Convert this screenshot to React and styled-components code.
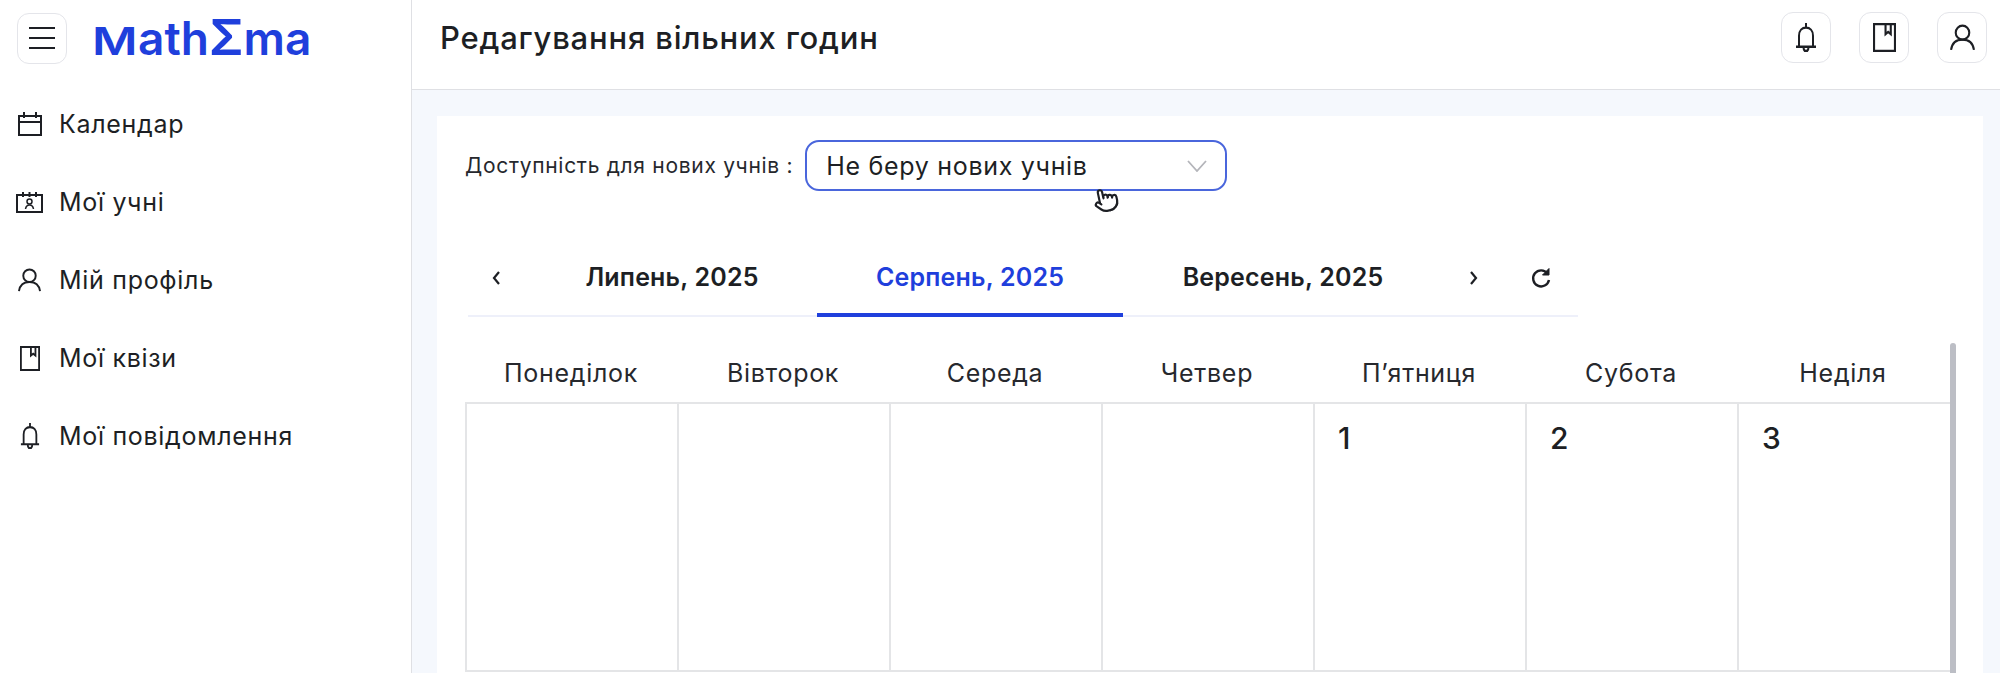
import React from 'react';
import styled, { createGlobalStyle } from 'styled-components';
import { Pointer } from 'lucide-react';

const GlobalStyle = createGlobalStyle`
  html, body {
    margin: 0;
    padding: 0;
    height: 100%;
    background: #ffffff;
  }
  * {
    box-sizing: border-box;
  }
  body {
    font-family: 'Inter', 'Noto Sans', sans-serif;
    color: #1d1f24;
  }
`;

const Page = styled.div`
  display: grid;
  grid-template-columns: 412px 1fr;
  width: 2000px;
  height: 673px;
  overflow: hidden;
`;

const Sidebar = styled.aside`
  background: #ffffff;
  border-right: 1px solid #dfe0e4;
`;

const Brand = styled.div`
  display: flex;
  align-items: center;
  height: 80px;
  padding: 0 0 4px 17px;
  gap: 25px;
`;

const IconButton = styled.button`
  display: flex;
  align-items: center;
  justify-content: center;
  width: 50px;
  height: 51px;
  padding: 0;
  background: #ffffff;
  border: 1px solid #e4e5ea;
  border-radius: 12px;
  color: #1d1f24;
`;

const Logo = styled.div`
  font-size: 46px;
  line-height: 1;
  font-weight: 600;
  color: #1f3fdc;
`;

const LogoInitial = styled.span`
  display: inline-block;
  margin-right: 11px;
  font-size: 38px;
  transform: scaleX(1.3);
  transform-origin: left center;
`;

const LogoSigma = styled.span`
  font-size: 50px;
  line-height: 0;
`;

const Nav = styled.nav`
  display: flex;
  flex-direction: column;
  padding-top: 5px;
`;

const NavItem = styled.div`
  display: flex;
  align-items: center;
  gap: 16px;
  height: 78px;
  padding-left: 16px;
  font-size: 25px;
  letter-spacing: 0.7px;
  color: #1d1f24;
`;

const NavIcon = styled.span`
  display: flex;
  justify-content: center;
  width: 27px;
`;

const Main = styled.main`
  display: flex;
  flex-direction: column;
  min-width: 0;
`;

const TopBar = styled.header`
  display: flex;
  align-items: center;
  justify-content: space-between;
  height: 90px;
  padding: 0 13px 14px 28px;
  background: #ffffff;
  border-bottom: 1px solid #dfe0e4;
  flex-shrink: 0;
`;

const Title = styled.h1`
  margin: 0;
  font-size: 31px;
  font-weight: 500;
  letter-spacing: 0.8px;
  color: #1d1f24;
`;

const TopActions = styled.div`
  display: flex;
  gap: 28px;
`;

const Content = styled.div`
  flex: 1;
  padding: 26px 17px 0 25px;
  background: #f5f8fd;
  min-height: 0;
`;

const Card = styled.section`
  height: 100%;
  padding: 24px 0 0 28px;
  background: #ffffff;
  overflow: hidden;
`;

const Availability = styled.div`
  position: relative;
  display: flex;
  align-items: center;
  gap: 12px;
`;

const Label = styled.label`
  font-size: 21px;
  letter-spacing: 0.7px;
  color: #26282d;
`;

const Select = styled.div`
  display: flex;
  align-items: center;
  justify-content: space-between;
  width: 422px;
  height: 51px;
  padding: 0 18px 0 19px;
  border: 2px solid #4a66dc;
  border-radius: 14px;
  font-size: 25px;
  letter-spacing: 0.7px;
  color: #1d1f24;
`;

const CursorMark = styled.span`
  position: absolute;
  left: 628px;
  top: 47px;
  display: flex;
  color: #1d1f24;
  transform: rotate(-12deg);
`;

const Tabs = styled.div`
  display: flex;
  align-items: center;
  width: 1110px;
  height: 76px;
  margin: 50px 0 26px 3px;
  border-bottom: 2px solid #eef0fa;
`;

const Arrow = styled.span`
  display: flex;
  justify-content: center;
  width: ${({ $width }) => $width}px;
  padding-left: ${({ $inset }) => $inset || 0}px;
  color: #1d1f24;
`;

const Tab = styled.div`
  display: flex;
  align-items: center;
  justify-content: center;
  width: 306px;
  height: 76px;
  margin-bottom: -2px;
  padding-left: ${({ $inset }) => $inset || 0}px;
  border-bottom: 4px solid ${({ $active }) => ($active ? '#1f3fdc' : 'transparent')};
  font-size: 25px;
  font-weight: 600;
  letter-spacing: 0.2px;
  color: ${({ $active }) => ($active ? '#1f3fdc' : '#1d1f24')};
`;

const Calendar = styled.div`
  position: relative;
  width: 1491px;
`;

const ScrollThumb = styled.div`
  position: absolute;
  top: 0;
  left: 1485px;
  width: 6px;
  height: 400px;
  border-radius: 3px;
  background: #bcbec5;
`;

const WeekHead = styled.div`
  display: grid;
  grid-template-columns: repeat(7, 212px);
  width: 1485px;
  height: 61px;
  border-bottom: 2px solid #e4e5e7;
`;

const WeekDay = styled.div`
  display: flex;
  align-items: center;
  justify-content: center;
  font-size: 25px;
  letter-spacing: 0.7px;
  color: #26282d;
`;

const Week = styled.div`
  display: grid;
  grid-template-columns: repeat(7, 212px);
  width: 1485px;
  height: 268px;
  border-bottom: 2px solid #e4e5e7;
`;

const Day = styled.div`
  padding: 16px 0 0 23px;
  border-left: 2px solid #e4e5e7;
  font-size: 30px;
  font-weight: 500;
  line-height: 36px;
  color: #1d1f24;
`;

const Line = { fill: 'none', stroke: 'currentColor', strokeWidth: 2 };

const MenuIcon = () => (
  <svg width="28" height="24" viewBox="0 0 28 24" {...Line}>
    <path d="M1 2h26M1 12h26M1 22h26" />
  </svg>
);

const CalendarIcon = () => (
  <svg width="24" height="24" viewBox="0 0 24 24" {...Line}>
    <path d="M1 4h22v19H1zM1 10h22M6 0v6M18 0v6" />
  </svg>
);

const StudentsIcon = () => (
  <svg width="27" height="22" viewBox="0 0 27 22" {...Line}>
    <path d="M1 4h25v17H1zM7 1v5M13.500 1v5M20 1v5" />
    <circle cx="13.500" cy="10.500" r="2.500" strokeWidth="1.500" />
    <path d="M9.500 18c.5-3 2-4 4-4s3.500 1 4 4" strokeWidth="1.500" />
  </svg>
);

const UserIcon = ({ width = 23, height = 24 }) => (
  <svg width={width} height={height} viewBox="0 0 24 25" preserveAspectRatio="none" {...Line}>
    <circle cx="12" cy="8" r="6.500" />
    <path d="M1 24c1-6.500 5-9.500 11-9.500s10 3 11 9.500" />
  </svg>
);

const BookIcon = ({ width = 20, height = 25 }) => (
  <svg width={width} height={height} viewBox="0 0 22 26" preserveAspectRatio="none" {...Line}>
    <path d="M1 1h20v24H1zM12 1v9l2.500-2 2.500 2V1" />
  </svg>
);

const BellIcon = ({ width = 20, height = 26 }) => (
  <svg width={width} height={height} viewBox="0 0 22 25" preserveAspectRatio="none" {...Line}>
    <path d="M11 0v4M4 20V11c0-4.500 3-7 7-7s7 2.500 7 7v9M1 20.500h20M8.500 21c0 4.500 5 4.500 5 0" />
  </svg>
);

const ChevronLeft = () => (
  <svg width="10" height="16" viewBox="0 0 10 16" fill="none" stroke="currentColor" strokeWidth="2.200">
    <path d="M8 2 3 8l5 6" />
  </svg>
);

const ChevronRight = () => (
  <svg width="10" height="16" viewBox="0 0 10 16" fill="none" stroke="currentColor" strokeWidth="2.200">
    <path d="m2 2 5 6-5 6" />
  </svg>
);

const RefreshIcon = () => (
  <svg width="22" height="22" viewBox="0 0 22 22" fill="none" stroke="currentColor" strokeWidth="2.400">
    <path d="M17.500 6.500A8 8 0 1 0 19 13" />
    <path d="M19 1.500v6.500h-6.500z" fill="currentColor" strokeWidth="1" />
  </svg>
);

const SelectChevron = () => (
  <svg width="20" height="12" viewBox="0 0 20 12" fill="none" stroke="#b4b5ba" strokeWidth="1.800">
    <path d="m1 1 9 10 9-10" />
  </svg>
);

const navItems = [
  { icon: <CalendarIcon />, label: 'Календар' },
  { icon: <StudentsIcon />, label: 'Мої учні' },
  { icon: <UserIcon />, label: 'Мій профіль' },
  { icon: <BookIcon />, label: 'Мої квізи' },
  { icon: <BellIcon />, label: 'Мої повідомлення' },
];

const weekDays = ['Понеділок', 'Вівторок', 'Середа', 'Четвер', 'П’ятниця', 'Субота', 'Неділя'];
const firstWeek = ['', '', '', '', '1', '2', '3'];

export default function App() {
  return (
    <Page>
      <GlobalStyle />
      <Sidebar>
        <Brand>
          <IconButton aria-label="Меню">
            <MenuIcon />
          </IconButton>
          <Logo><LogoInitial>M</LogoInitial>ath<LogoSigma>Σ</LogoSigma>ma</Logo>
        </Brand>
        <Nav>
          {navItems.map((item) => (
            <NavItem key={item.label}>
              <NavIcon>{item.icon}</NavIcon>
              {item.label}
            </NavItem>
          ))}
        </Nav>
      </Sidebar>
      <Main>
        <TopBar>
          <Title>Редагування вільних годин</Title>
          <TopActions>
            <IconButton aria-label="Повідомлення"><BellIcon width={22} height={29} /></IconButton>
            <IconButton aria-label="Квізи"><BookIcon width={23} height={29} /></IconButton>
            <IconButton aria-label="Профіль"><UserIcon width={25} height={27} /></IconButton>
          </TopActions>
        </TopBar>
        <Content>
          <Card>
            <Availability>
              <Label>Доступність для нових учнів :</Label>
              <Select>
                Не беру нових учнів
                <SelectChevron />
              </Select>
              <CursorMark>
                <Pointer size={26} fill="#ffffff" strokeWidth={2} />
              </CursorMark>
            </Availability>
            <Tabs>
              <Arrow $width={43} $inset={12}><ChevronLeft /></Arrow>
              <Tab $inset={16}>Липень, 2025</Tab>
              <Tab $active>Серпень, 2025</Tab>
              <Tab $inset={14}>Вересень, 2025</Tab>
              <Arrow $width={90}><ChevronRight /></Arrow>
              <Arrow $width={44}><RefreshIcon /></Arrow>
            </Tabs>
            <Calendar>
              <ScrollThumb />
              <WeekHead>
                {weekDays.map((day) => (
                  <WeekDay key={day}>{day}</WeekDay>
                ))}
              </WeekHead>
              <Week>
                {firstWeek.map((day, index) => (
                  <Day key={index}>{day}</Day>
                ))}
              </Week>
            </Calendar>
          </Card>
        </Content>
      </Main>
    </Page>
  );
}
